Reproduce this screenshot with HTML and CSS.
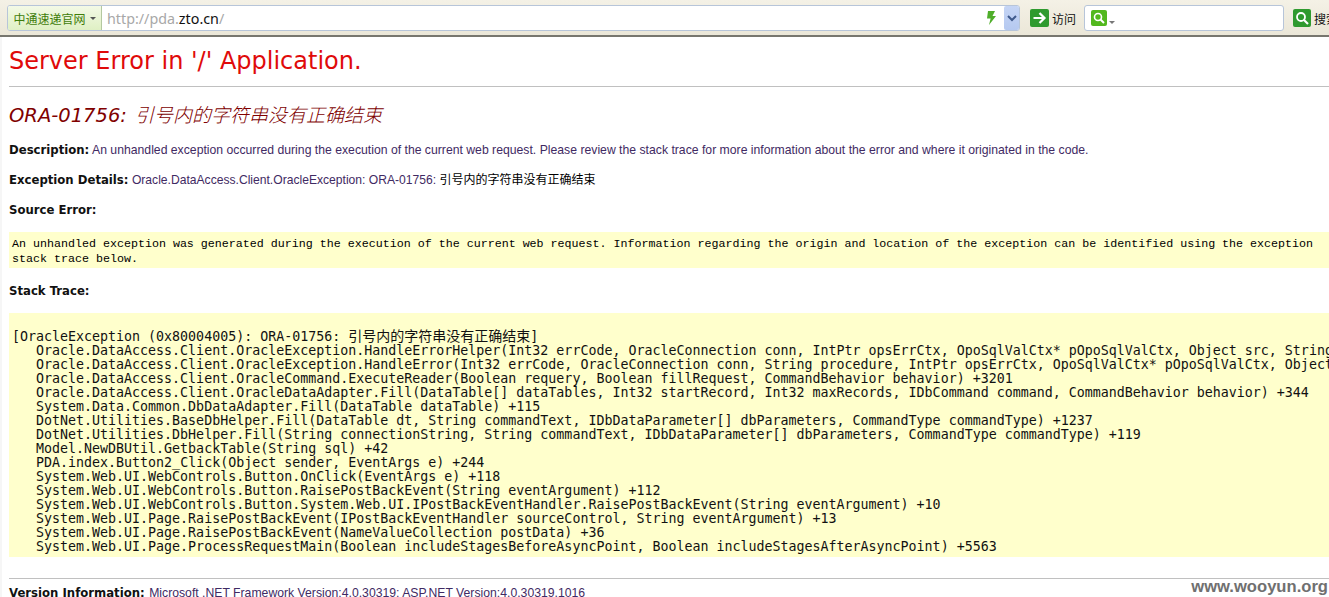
FILE: index.html
```html
<!DOCTYPE html>
<html lang="zh">
<head>
<meta charset="utf-8">
<title>Server Error</title>
<link rel="stylesheet" href="styles.css">
</head>
<body>
<div class="toolbar">
  <div class="address">
    <div class="site-btn"><span>中通速递官网</span><i class="caret"></i></div>
    <div class="url"><span class="dim">http://pda.</span>zto.cn<span class="dim">/</span></div>
    <svg class="bolt" width="12" height="16" viewBox="0 0 12 16"><path d="M3 1h7L7.500 6H11L4 15l1.600-6.500H2z" fill="#4fae2a"/></svg>
    <div class="drop"><svg width="10" height="7" viewBox="0 0 10 7"><path d="M1 1l4 4 4-4" fill="none" stroke="#3f5a8c" stroke-width="2"/></svg></div>
  </div>
  <div class="tool go">
    <svg class="ico" width="19" height="18" viewBox="0 0 19 18"><rect width="19" height="18" rx="2" fill="#2f9a2f"/><path d="M3.500 9h11M9.500 4l5 5-5 5" fill="none" stroke="#fff" stroke-width="2.200"/></svg>
    <span>访问</span>
  </div>
  <div class="search">
    <svg class="ico" width="16" height="16" viewBox="0 0 16 16"><rect width="16" height="16" rx="2" fill="#52b81e"/><circle cx="7" cy="7" r="3.500" fill="none" stroke="#fff" stroke-width="1.600"/><path d="M9.500 9.500l3.500 3.500" stroke="#fff" stroke-width="2"/></svg>
    <i class="mini-caret"></i>
  </div>
  <div class="tool find">
    <svg class="ico" width="18" height="18" viewBox="0 0 18 18"><rect width="18" height="18" rx="2" fill="#2f9a2f"/><circle cx="8" cy="8" r="4" fill="none" stroke="#fff" stroke-width="1.800"/><path d="M11 11l4 4" stroke="#fff" stroke-width="2.200"/></svg>
    <span>搜索</span>
  </div>
</div>
<main class="page">
  <h1 class="app-title">Server Error in '/' Application.</h1>
  <hr class="rule">
  <h2 class="err-title">ORA-01756: <span class="cjk-it">引号内的字符串没有正确结束</span></h2>
  <p class="row desc"><b>Description:</b> <span>An unhandled exception occurred during the execution of the current web request. Please review the stack trace for more information about the error and where it originated in the code.</span></p>
  <p class="row details"><b>Exception Details:</b> <span>Oracle.DataAccess.Client.OracleException: ORA-01756: <em>引号内的字符串没有正确结束</em></span></p>
  <p class="row source"><b>Source Error:</b></p>
  <div class="box msg">An unhandled exception was generated during the execution of the current web request. Information regarding the origin and location of the exception can be identified using the exception stack trace below.</div>
  <p class="row stack-label"><b>Stack Trace:</b></p>
  <pre class="box trace">[OracleException (0x80004005): ORA-01756: <span class="cjk">引号内的字符串没有正确结束</span>]
   Oracle.DataAccess.Client.OracleException.HandleErrorHelper(Int32 errCode, OracleConnection conn, IntPtr opsErrCtx, OpoSqlValCtx* pOpoSqlValCtx, Object src, String procedure, Boolean bCheck)
   Oracle.DataAccess.Client.OracleException.HandleError(Int32 errCode, OracleConnection conn, String procedure, IntPtr opsErrCtx, OpoSqlValCtx* pOpoSqlValCtx, Object src, Boolean bCheck)
   Oracle.DataAccess.Client.OracleCommand.ExecuteReader(Boolean requery, Boolean fillRequest, CommandBehavior behavior) +3201
   Oracle.DataAccess.Client.OracleDataAdapter.Fill(DataTable[] dataTables, Int32 startRecord, Int32 maxRecords, IDbCommand command, CommandBehavior behavior) +344
   System.Data.Common.DbDataAdapter.Fill(DataTable dataTable) +115
   DotNet.Utilities.BaseDbHelper.Fill(DataTable dt, String commandText, IDbDataParameter[] dbParameters, CommandType commandType) +1237
   DotNet.Utilities.DbHelper.Fill(String connectionString, String commandText, IDbDataParameter[] dbParameters, CommandType commandType) +119
   Model.NewDBUtil.GetbackTable(String sql) +42
   PDA.index.Button2<span class="us">_</span>Click(Object sender, EventArgs e) +244
   System.Web.UI.WebControls.Button.OnClick(EventArgs e) +118
   System.Web.UI.WebControls.Button.RaisePostBackEvent(String eventArgument) +112
   System.Web.UI.WebControls.Button.System.Web.UI.IPostBackEventHandler.RaisePostBackEvent(String eventArgument) +10
   System.Web.UI.Page.RaisePostBackEvent(IPostBackEventHandler sourceControl, String eventArgument) +13
   System.Web.UI.Page.RaisePostBackEvent(NameValueCollection postData) +36
   System.Web.UI.Page.ProcessRequestMain(Boolean includeStagesBeforeAsyncPoint, Boolean includeStagesAfterAsyncPoint) +5563</pre>
  <hr class="rule foot-rule">
  <p class="row version"><b>Version Information:</b> <span>Microsoft .NET Framework Version:4.0.30319; ASP.NET Version:4.0.30319.1016</span></p>
</main>
<div class="watermark">www.wooyun.org</div>
</body>
</html>
```
FILE: styles.css
```css
html, body { margin: 0; padding: 0; height: 597px; overflow: hidden; background: #fff; }
body { position: relative; font-family: "Liberation Sans", "Noto Sans CJK SC", sans-serif; }

.toolbar { height: 37px; box-sizing: border-box; display: flex; align-items: center; background: linear-gradient(#f4f1e6, #ebe7d8); border-bottom: 2px solid #77766e; padding: 1px 0 0 7px; overflow: hidden; white-space: nowrap; }
.address { width: 1013px; height: 26px; box-sizing: border-box; flex: none; display: flex; align-items: center; background: #fff; border: 1px solid #b7c5d9; border-radius: 3px; }
.site-btn { width: 94px; height: 24px; flex: none; box-sizing: border-box; display: flex; align-items: center; justify-content: center; gap: 4px; background: linear-gradient(#f3f9e6, #dff0c4); border-right: 1px solid #b4c8a0; border-radius: 2px 0 0 2px; color: #3f7d0a; font: 12px "Noto Sans CJK SC", sans-serif; }
.caret { border: 3px solid transparent; border-top: 3px solid #555; border-bottom: 0; }
.url { flex: 1; padding-left: 5px; font: 14.300px "Noto Sans", sans-serif; color: #111; }
.dim { color: #a8a8a8; }
.bolt { margin-right: 7px; }
.drop { width: 15px; height: 24px; background: linear-gradient(#c5d5f5, #b5c9f0); display: flex; align-items: center; justify-content: center; border-radius: 2px; }
.tool { display: flex; align-items: center; gap: 3px; flex: none; font: 12px "Noto Sans CJK SC", sans-serif; color: #111; }
.go { margin-left: 10px; }
.search { width: 200px; height: 26px; box-sizing: border-box; flex: none; margin-left: 8px; padding-left: 6px; display: flex; align-items: center; background: #fff; border: 1px solid #b7c5d9; border-radius: 3px; }
.mini-caret { border: 3px solid transparent; border-top: 3px solid #777; border-bottom: 0; margin: 8px 0 0 2px; }
.find { margin-left: 9px; }

.page { padding: 0 0 0 7px; border-left: 2px solid #f6f6f6; color: #000; }
.app-title { margin: 0; padding-top: 9px; font: 400 24px/30px "DejaVu Sans", Verdana, sans-serif; color: #e00a0a; }
.rule { height: 1px; border: 0; background: #c0c0c0; margin: 0; }
.app-title + .rule { margin-top: 10px; }
.err-title { margin: 0; padding-top: 16px; font: italic 400 19.500px/22px "DejaVu Sans", Verdana, sans-serif; color: #800000; white-space: nowrap; }
.cjk-it { margin-left: 2px; font-family: "Noto Sans CJK SC", sans-serif; font-size: 19px; font-weight: 300; color: #800000; }
.row { margin: 0; height: 16px; font-size: 12.220px; line-height: 16px; color: #3f2a63; white-space: nowrap; }
.row b { font: 700 11.700px/16px "DejaVu Sans", Verdana, sans-serif; color: #111; }
.row em { font: normal 12px/16px "Noto Sans CJK SC", sans-serif; color: #000; }
.desc { margin-top: 15px; }
.version span { margin-left: 1px; }
.details { margin-top: 13px; font-size: 12.120px; }
.source { margin-top: 15px; }
.box { background: #ffffcc; }
.msg { margin-top: 14px; padding: 5px 3px 1px; font: 11.670px/15px "Liberation Mono", monospace; color: #000; }
.stack-label { margin-top: 15px; }
.trace { margin: 14px 0 0; padding: 15px 0 4px 3px; height: 225px; box-sizing: content-box; overflow: hidden; font: 13.300px/14px "DejaVu Sans Mono", monospace; color: #111; white-space: pre; }
.cjk { font-family: "Noto Sans CJK SC", sans-serif; font-size: 14px; }
.us { position: relative; top: -1px; }
.foot-rule { margin-top: 21px; }
.version { margin-top: 6px; }
.watermark { position: absolute; right: 1px; bottom: 1px; font: 700 16.600px/18px "Liberation Sans", sans-serif; color: #707070; }
```
